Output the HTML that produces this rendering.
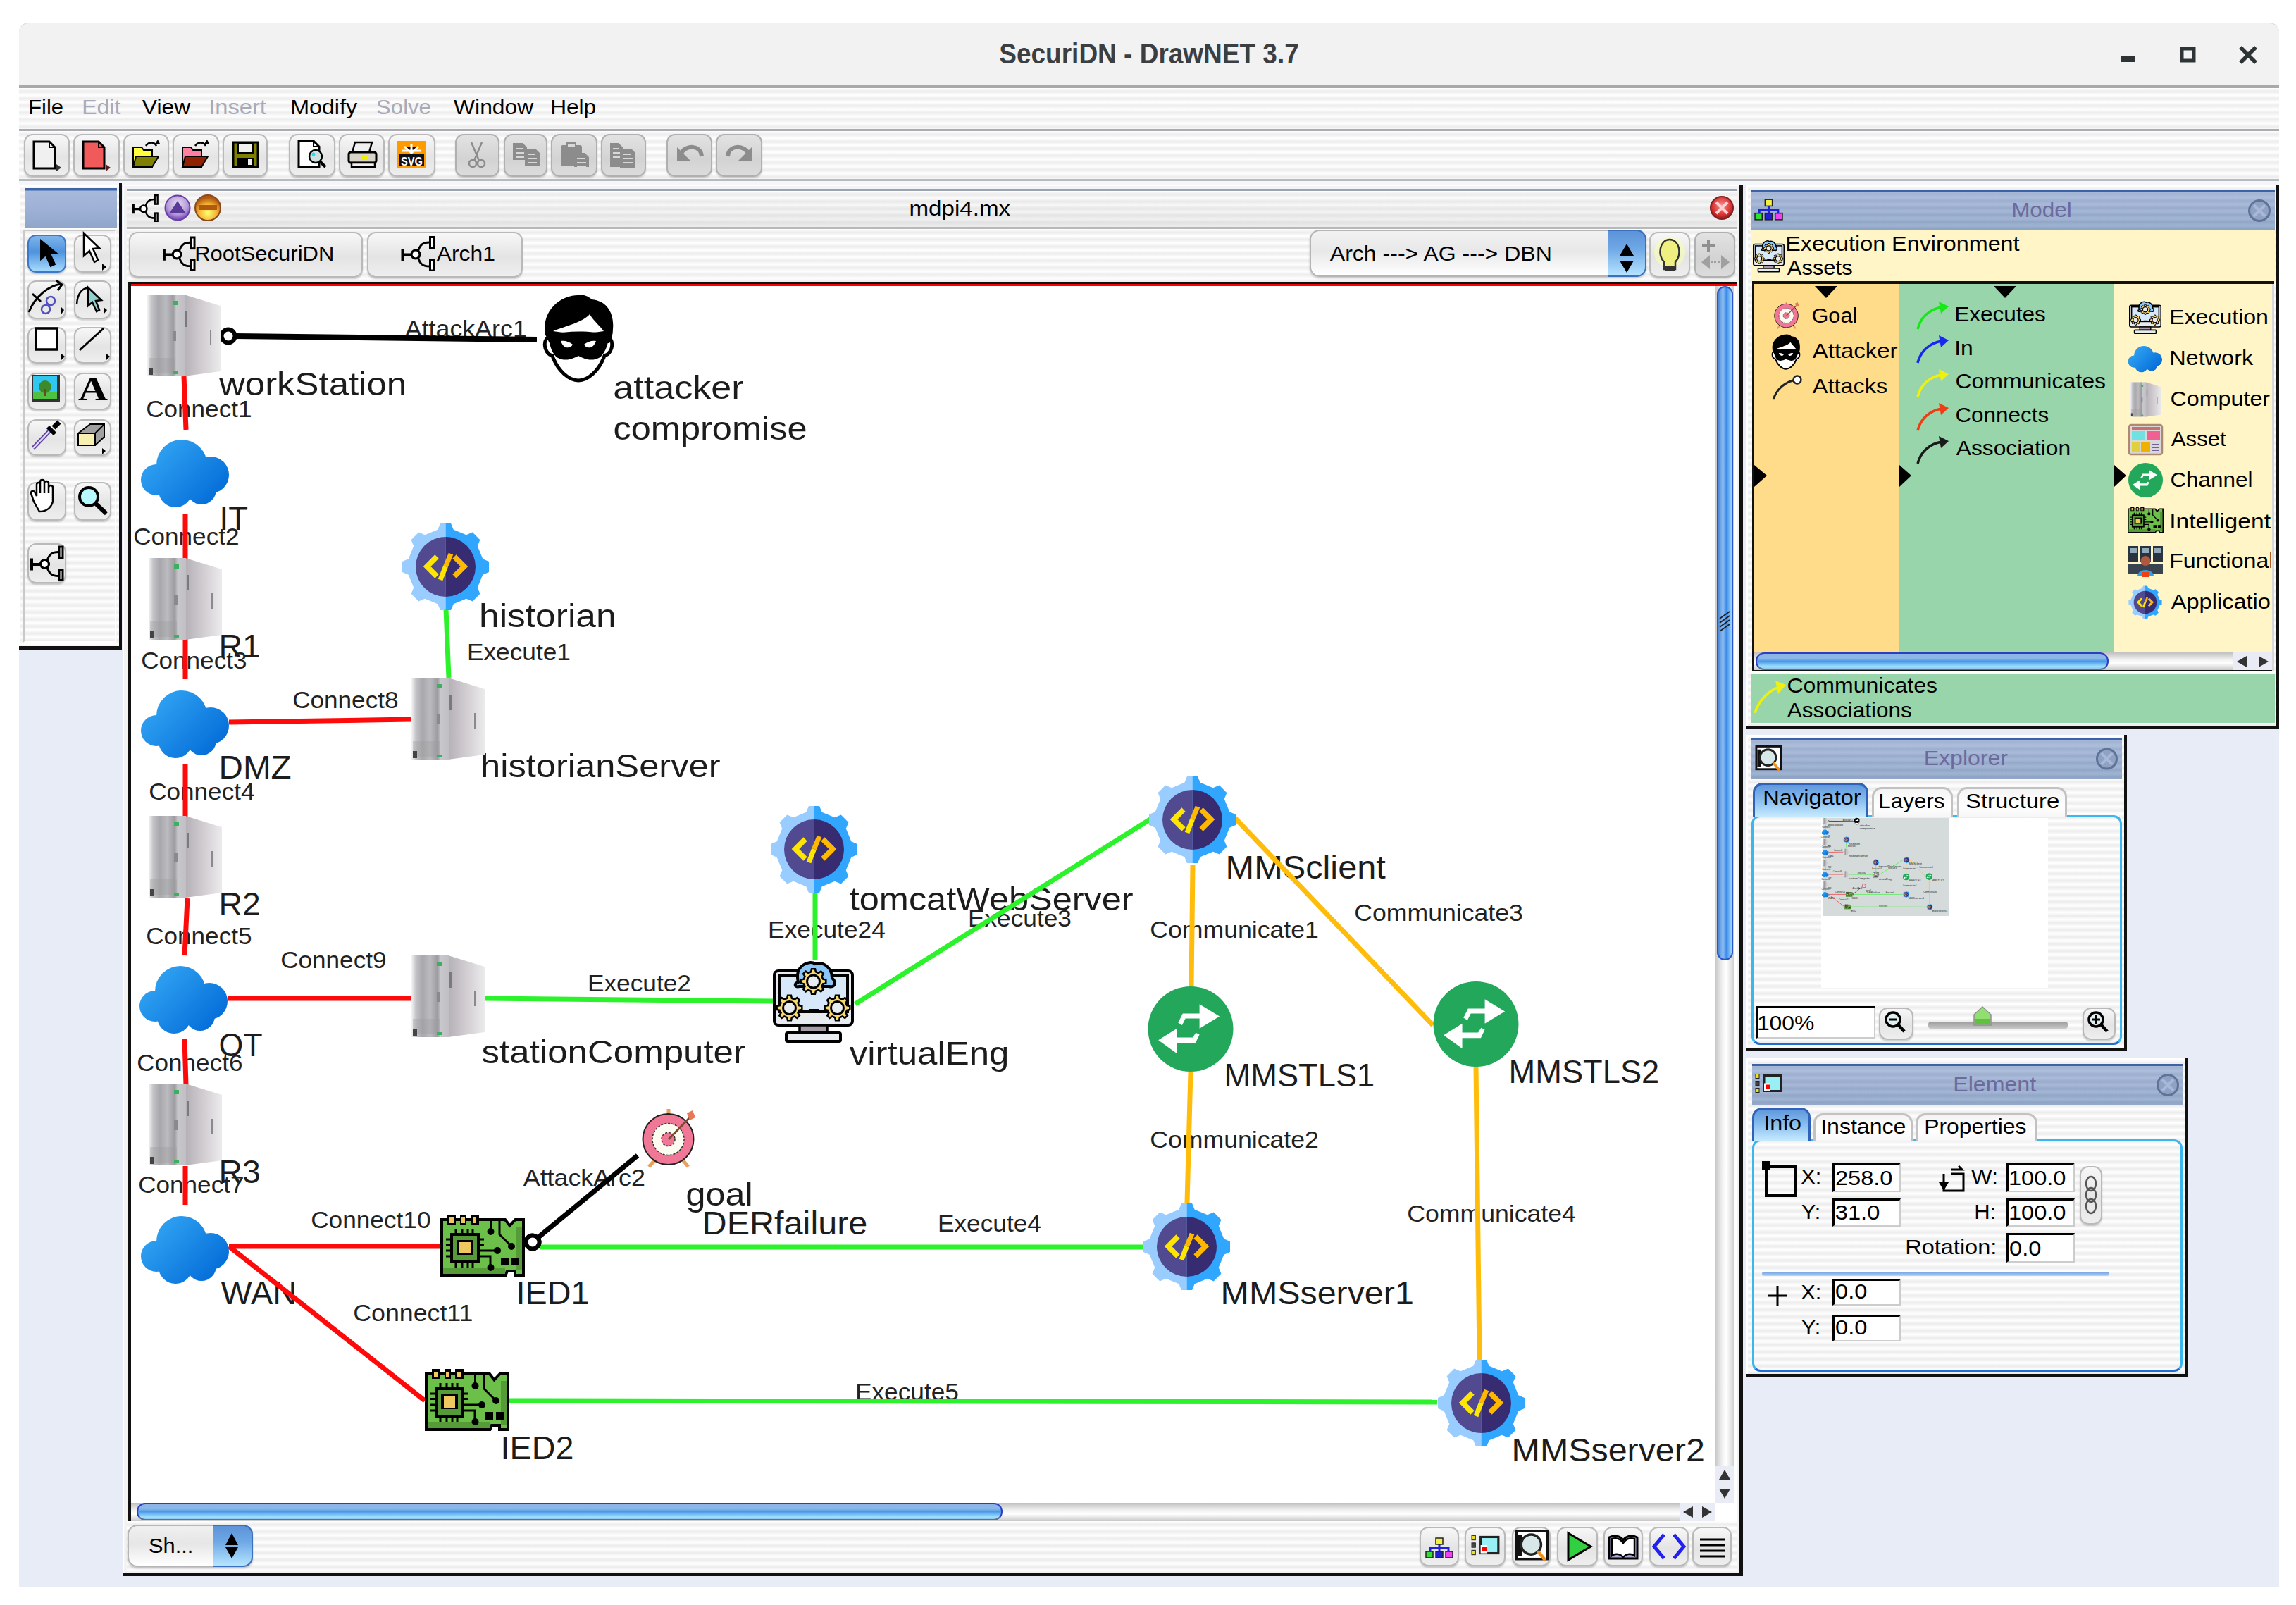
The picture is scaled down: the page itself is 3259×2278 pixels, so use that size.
<!DOCTYPE html>
<html><head><meta charset="utf-8"><title>SecuriDN - DrawNET 3.7</title>
<style>
html,body{margin:0;padding:0;}
body{width:3259px;height:2278px;position:relative;overflow:hidden;background:#fff;font-family:"Liberation Sans", sans-serif;}
body>div{position:absolute;box-sizing:border-box;}
.btn{border-radius:12px;border:2px solid #b9b9b9;background:linear-gradient(180deg,#f7f7f7 0%,#e4e4e4 55%,#eeeeee 100%);box-shadow:0 2px 2px rgba(0,0,0,.18);}
.btnd{border-radius:12px;border:2px solid #b0b0b0;background:linear-gradient(180deg,#e2e2e2 0%,#d3d3d3 60%,#dcdcdc 100%);box-shadow:0 2px 2px rgba(0,0,0,.15);}
.btns{border-radius:12px;border:2px solid #3d78c8;background:linear-gradient(180deg,#7fb4ea 0%,#4d93dd 45%,#a8dcff 100%);box-shadow:0 2px 2px rgba(0,0,0,.2);}
.fld{background:#fff;border-top:3px solid #000;border-left:3px solid #000;border-right:2px solid #ccc;border-bottom:2px solid #ccc;}
svg text{font-family:"Liberation Sans", sans-serif;}
</style></head><body>
<div style="left:27px;top:32px;width:3208px;height:2220px;background:#e8ecf6;border-radius:14px 14px 0 0;"></div>
<div style="left:27px;top:32px;width:3208px;height:91px;background:#f2f2f2;border-radius:14px 14px 0 0;border-top:1px solid #d8d8d8;"></div>
<div style="left:27px;top:121px;width:3208px;height:4px;background:#a9a9a5;"></div>
<div style="left:27px;top:125px;width:3208px;height:58px;background:repeating-linear-gradient(180deg,#ffffff 0px,#ececec 5px,#ffffff 10px);"></div>
<div style="left:27px;top:183px;width:3208px;height:74px;background:repeating-linear-gradient(180deg,#ffffff 0px,#ececec 5px,#ffffff 10px);border-top:3px solid #a9abb1;border-bottom:3px solid #b8bac0;"></div>
<div class="btn" style="left:34px;top:190px;width:65px;height:61px;"></div>
<div class="btn" style="left:104px;top:190px;width:66px;height:61px;"></div>
<div class="btn" style="left:175px;top:190px;width:65px;height:61px;"></div>
<div class="btn" style="left:245px;top:190px;width:66px;height:61px;"></div>
<div class="btn" style="left:316px;top:190px;width:64px;height:61px;"></div>
<div class="btn" style="left:410px;top:190px;width:66px;height:61px;"></div>
<div class="btn" style="left:481px;top:190px;width:65px;height:61px;"></div>
<div class="btn" style="left:551px;top:190px;width:67px;height:61px;"></div>
<div class="btnd" style="left:646px;top:190px;width:63px;height:61px;"></div>
<div class="btnd" style="left:715px;top:190px;width:62px;height:61px;"></div>
<div class="btnd" style="left:782px;top:190px;width:66px;height:61px;"></div>
<div class="btnd" style="left:853px;top:190px;width:64px;height:61px;"></div>
<div class="btnd" style="left:946px;top:190px;width:65px;height:61px;"></div>
<div class="btnd" style="left:1016px;top:190px;width:66px;height:61px;"></div>
<div style="left:27px;top:257px;width:3208px;height:5px;background:#f4f6fa;"></div>
<div style="left:27px;top:262px;width:146px;height:660px;background:repeating-linear-gradient(180deg,#ffffff 0px,#ececec 5px,#ffffff 10px);border-left:2px solid #ffffff;border-top:2px solid #ffffff;"></div>
<div style="left:169px;top:260px;width:4px;height:662px;background:#111;"></div>
<div style="left:27px;top:917px;width:146px;height:5px;background:#111;"></div>
<div style="left:35px;top:267px;width:131px;height:57px;background:linear-gradient(180deg,#3c64a8 0,#3c64a8 3px,#a6b9dc 4px,#9fb1d6 50%,#8ea6c9 100%);"></div>
<div style="left:33px;top:326px;width:132px;height:586px;border:2px solid #c9c9c9;border-right-color:#fff;border-bottom-color:#fff;"></div>
<div class="btns" style="left:39px;top:333px;width:55px;height:54px;"></div>
<div class="btn" style="left:105px;top:333px;width:53px;height:54px;"></div>
<div class="btn" style="left:39px;top:398px;width:55px;height:55px;"></div>
<div class="btn" style="left:105px;top:398px;width:53px;height:55px;"></div>
<div class="btn" style="left:39px;top:464px;width:55px;height:52px;"></div>
<div class="btn" style="left:105px;top:464px;width:53px;height:52px;"></div>
<div class="btn" style="left:39px;top:529px;width:55px;height:53px;"></div>
<div class="btn" style="left:105px;top:529px;width:53px;height:53px;"></div>
<div class="btn" style="left:39px;top:595px;width:55px;height:52px;"></div>
<div class="btn" style="left:105px;top:595px;width:53px;height:52px;"></div>
<div class="btn" style="left:39px;top:684px;width:55px;height:55px;"></div>
<div class="btn" style="left:105px;top:684px;width:53px;height:55px;"></div>
<div class="btn" style="left:39px;top:771px;width:55px;height:57px;"></div>
<div style="left:174px;top:262px;width:2300px;height:1975px;background:#f3f3f3;border-left:2px solid #fff;border-top:2px solid #fff;"></div>
<div style="left:2469px;top:262px;width:5px;height:1975px;background:#111;"></div>
<div style="left:174px;top:2232px;width:2300px;height:5px;background:#111;"></div>
<div style="left:180px;top:268px;width:2286px;height:57px;background:linear-gradient(180deg,rgba(255,255,255,0) 0%,rgba(200,200,200,.35) 100%),repeating-linear-gradient(180deg,#ffffff 0px,#ececec 5px,#ffffff 10px);border-top:3px solid #9aa3b4;border-bottom:3px solid #b8b8b8;"></div>
<div style="left:180px;top:325px;width:2286px;height:76px;background:repeating-linear-gradient(180deg,#ffffff 0px,#ececec 5px,#ffffff 10px);"></div>
<div class="btn" style="left:183px;top:329px;width:332px;height:65px;"></div>
<div class="btn" style="left:521px;top:329px;width:221px;height:65px;"></div>
<div style="left:1859px;top:326px;width:478px;height:67px;border-radius:14px;border:2px solid #b5b5b5;background:linear-gradient(180deg,#f2f2f2,#e8e8e8 45%,#ffffff 100%);box-shadow:0 2px 3px rgba(0,0,0,.2);"></div>
<div style="left:2282px;top:326px;width:55px;height:67px;border-radius:0 14px 14px 0;border:2px solid #3a70c0;border-left:none;background:linear-gradient(180deg,#5d93d8 0%,#6ea8e6 40%,#b6e4ff 100%);"></div>
<div class="btn" style="left:2341px;top:329px;width:58px;height:65px;"></div>
<div class="btnd" style="left:2405px;top:329px;width:58px;height:65px;"></div>
<div style="left:182px;top:401px;width:2284px;height:1759px;background:#fff;"></div>
<div style="left:182px;top:400px;width:2284px;height:3px;background:#111;"></div>
<div style="left:182px;top:403px;width:2284px;height:3px;background:#f00;"></div>
<div style="left:181px;top:400px;width:5px;height:1760px;background:#111;"></div>
<div style="left:2435px;top:406px;width:26px;height:1727px;background:linear-gradient(90deg,#c8c8c8,#f4f4f4 40%,#ffffff 60%,#d0d0d0);"></div>
<div style="left:2437px;top:406px;width:23px;height:957px;border-radius:12px;border:2px solid #2a55c8;background:linear-gradient(90deg,#4a86d8 0%,#8fc0f4 35%,#3d8ae8 60%,#9ed8ff 100%);"></div>
<div style="left:2435px;top:2081px;width:26px;height:52px;background:#e9ecf4;"></div>
<div style="left:186px;top:2133px;width:2249px;height:26px;background:linear-gradient(180deg,#c0c0c0,#f0f0f0 40%,#ffffff 60%,#c8c8c8);"></div>
<div style="left:194px;top:2133px;width:1229px;height:25px;border-radius:12px;border:2px solid #2a40c0;border-bottom-color:#607090;background:linear-gradient(180deg,#8db4e4 0%,#8ab8ea 30%,#4a98e8 50%,#9ee0ff 85%,#90c8f0 100%);"></div>
<div style="left:2384px;top:2133px;width:51px;height:26px;background:#e9ecf4;"></div>
<div style="left:180px;top:2159px;width:2286px;height:71px;background:repeating-linear-gradient(180deg,#ffffff 0px,#ececec 5px,#ffffff 10px);"></div>
<div style="left:181px;top:2164px;width:178px;height:60px;border-radius:14px;border:2px solid #b5b5b5;background:linear-gradient(180deg,#f0f0f0,#e6e6e6 45%,#ffffff 100%);box-shadow:0 2px 3px rgba(0,0,0,.2);"></div>
<div style="left:303px;top:2164px;width:56px;height:60px;border-radius:0 14px 14px 0;border:2px solid #3a70c0;border-left:none;background:linear-gradient(180deg,#5d93d8 0%,#6ea8e6 40%,#b6e4ff 100%);"></div>
<div class="btn" style="left:2015px;top:2167px;width:56px;height:56px;"></div>
<div class="btn" style="left:2079px;top:2167px;width:58px;height:56px;"></div>
<div class="btn" style="left:2146px;top:2167px;width:55px;height:56px;"></div>
<div class="btn" style="left:2210px;top:2167px;width:58px;height:56px;"></div>
<div class="btn" style="left:2276px;top:2167px;width:56px;height:56px;"></div>
<div class="btn" style="left:2341px;top:2167px;width:56px;height:56px;"></div>
<div class="btn" style="left:2402px;top:2167px;width:56px;height:56px;"></div>
<div style="left:2479px;top:262px;width:756px;height:772px;background:repeating-linear-gradient(180deg,#ffffff 0px,#ececec 5px,#ffffff 10px);border-left:2px solid #fff;border-top:2px solid #fff;"></div>
<div style="left:3231px;top:262px;width:4px;height:772px;background:#111;"></div>
<div style="left:2479px;top:1030px;width:756px;height:4px;background:#111;"></div>
<div style="left:2485px;top:270px;width:744px;height:57px;background:linear-gradient(180deg,#3b63a6 0,#3b63a6 3px,rgba(0,0,0,0) 3px),repeating-linear-gradient(180deg,rgba(255,255,255,.10) 0,rgba(0,0,0,.04) 5px,rgba(255,255,255,.10) 10px),linear-gradient(180deg,#a9bcdc 0%,#9fb2d4 45%,#92a9cb 100%);"></div>
<div style="left:2485px;top:327px;width:744px;height:72px;background:#fff5c6;"></div>
<div style="left:2487px;top:399px;width:741px;height:553px;background:#111;"></div>
<div style="left:2490px;top:403px;width:206px;height:523px;background:#ffdc8a;"></div>
<div style="left:2696px;top:403px;width:304px;height:523px;background:#98d5aa;"></div>
<div style="left:3000px;top:403px;width:225px;height:523px;background:#fff5c6;"></div>
<div style="left:3225px;top:403px;width:3px;height:549px;background:#d8d8d8;"></div>
<div style="left:2490px;top:926px;width:735px;height:25px;background:linear-gradient(180deg,#c0c0c0,#f0f0f0 40%,#ffffff 60%,#c8c8c8);"></div>
<div style="left:2492px;top:926px;width:501px;height:25px;border-radius:12px;border:2px solid #2a40c0;border-bottom-color:#607090;background:linear-gradient(180deg,#8db4e4 0%,#8ab8ea 30%,#4a98e8 50%,#9ee0ff 85%,#90c8f0 100%);"></div>
<div style="left:3170px;top:926px;width:55px;height:25px;background:#e9ecf4;"></div>
<div style="left:2485px;top:956px;width:744px;height:70px;background:#98d5aa;"></div>
<div style="left:2479px;top:1043px;width:540px;height:449px;background:repeating-linear-gradient(180deg,#ffffff 0px,#ececec 5px,#ffffff 10px);border-left:2px solid #fff;border-top:2px solid #fff;"></div>
<div style="left:3015px;top:1043px;width:4px;height:449px;background:#111;"></div>
<div style="left:2479px;top:1488px;width:540px;height:4px;background:#111;"></div>
<div style="left:2485px;top:1048px;width:527px;height:58px;background:linear-gradient(180deg,#3b63a6 0,#3b63a6 3px,rgba(0,0,0,0) 3px),repeating-linear-gradient(180deg,rgba(255,255,255,.10) 0,rgba(0,0,0,.04) 5px,rgba(255,255,255,.10) 10px),linear-gradient(180deg,#a9bcdc 0%,#9fb2d4 45%,#92a9cb 100%);"></div>
<div style="left:2486px;top:1157px;width:526px;height:326px;border-radius:12px;border:3px solid #3bb6ee;border-bottom-color:#1e6fd0;"></div>
<div style="left:2488px;top:1111px;width:164px;height:49px;border-radius:14px 14px 0 0;border:3px solid #2f62b8;border-bottom:none;background:linear-gradient(180deg,#5f98dc 0%,#8cc0f0 50%,#c8ecff 100%);"></div>
<div style="left:2657px;top:1117px;width:115px;height:43px;border-radius:14px 14px 0 0;border:3px solid #c2c2c2;border-bottom:none;background:linear-gradient(180deg,#f4f4f4 0%,#ffffff 60%,#f6f6f6 100%);"></div>
<div style="left:2778px;top:1117px;width:156px;height:43px;border-radius:14px 14px 0 0;border:3px solid #c2c2c2;border-bottom:none;background:linear-gradient(180deg,#f4f4f4 0%,#ffffff 60%,#f6f6f6 100%);"></div>
<div style="left:2585px;top:1161px;width:322px;height:241px;background:#fff;"></div>
<div style="left:2587px;top:1161px;width:179px;height:139px;background:#d5dbdb;"></div>
<div class="fld" style="left:2493px;top:1428px;width:169px;height:46px;"></div>
<div class="btn" style="left:2667px;top:1430px;width:49px;height:46px;"></div>
<div class="btn" style="left:2956px;top:1430px;width:47px;height:46px;"></div>
<div style="left:2737px;top:1450px;width:198px;height:10px;background:linear-gradient(180deg,#9c9c9c,#c8c8c8);border-radius:4px;"></div>
<div style="left:2479px;top:1502px;width:627px;height:452px;background:repeating-linear-gradient(180deg,#ffffff 0px,#ececec 5px,#ffffff 10px);border-left:2px solid #fff;border-top:2px solid #fff;"></div>
<div style="left:3102px;top:1502px;width:4px;height:452px;background:#111;"></div>
<div style="left:2479px;top:1950px;width:627px;height:4px;background:#111;"></div>
<div style="left:2487px;top:1510px;width:611px;height:58px;background:linear-gradient(180deg,#3b63a6 0,#3b63a6 3px,rgba(0,0,0,0) 3px),repeating-linear-gradient(180deg,rgba(255,255,255,.10) 0,rgba(0,0,0,.04) 5px,rgba(255,255,255,.10) 10px),linear-gradient(180deg,#a9bcdc 0%,#9fb2d4 45%,#92a9cb 100%);"></div>
<div style="left:2487px;top:1617px;width:611px;height:330px;border-radius:12px;border:3px solid #3bb6ee;border-bottom-color:#1e6fd0;"></div>
<div style="left:2487px;top:1572px;width:83px;height:48px;border-radius:14px 14px 0 0;border:3px solid #2f62b8;border-bottom:none;background:linear-gradient(180deg,#5f98dc 0%,#8cc0f0 50%,#c8ecff 100%);"></div>
<div style="left:2574px;top:1580px;width:141px;height:40px;border-radius:14px 14px 0 0;border:3px solid #c2c2c2;border-bottom:none;background:linear-gradient(180deg,#f4f4f4 0%,#ffffff 60%,#f6f6f6 100%);"></div>
<div style="left:2719px;top:1580px;width:173px;height:40px;border-radius:14px 14px 0 0;border:3px solid #c2c2c2;border-bottom:none;background:linear-gradient(180deg,#f4f4f4 0%,#ffffff 60%,#f6f6f6 100%);"></div>
<div class="fld" style="left:2601px;top:1650px;width:97px;height:42px;"></div>
<div class="fld" style="left:2601px;top:1701px;width:97px;height:40px;"></div>
<div class="fld" style="left:2848px;top:1650px;width:97px;height:42px;"></div>
<div class="fld" style="left:2848px;top:1701px;width:97px;height:40px;"></div>
<div class="fld" style="left:2848px;top:1750px;width:97px;height:42px;"></div>
<div class="fld" style="left:2601px;top:1815px;width:97px;height:38px;"></div>
<div class="fld" style="left:2601px;top:1866px;width:97px;height:38px;"></div>
<div style="left:2501px;top:1805px;width:493px;height:6px;background:linear-gradient(180deg,#6c9ce0,#b8d8f8);border-radius:3px;"></div>
<div class="btn" style="left:2952px;top:1655px;width:32px;height:83px;"></div>
<svg style="position:absolute;left:0;top:0" width="3259" height="2278" viewBox="0 0 3259 2278">
<defs><linearGradient id="gCloud" gradientUnits="userSpaceOnUse" x1="10" y1="0" x2="110" y2="98"><stop offset="0" stop-color="#36aaf6"/><stop offset="1" stop-color="#0068d6"/></linearGradient>
<linearGradient id="gPcSide" x1="0" y1="0" x2="1" y2="0"><stop offset="0" stop-color="#b4b0b6"/><stop offset=".55" stop-color="#d4d0d4"/><stop offset="1" stop-color="#ecebec"/></linearGradient>
<linearGradient id="gPcFront" x1="0" y1="0" x2="1" y2="0"><stop offset="0" stop-color="#f4f4f6"/><stop offset=".12" stop-color="#c4c4c8"/><stop offset=".3" stop-color="#a8a8ac"/><stop offset=".5" stop-color="#bcbcc0"/><stop offset=".7" stop-color="#9c9ca0"/><stop offset=".78" stop-color="#c8c8cc"/><stop offset="1" stop-color="#c0c0c4"/></linearGradient>
<symbol id="pc" viewBox="0 0 104 116">
<polygon points="52,0 104,16 104,109 52,116" fill="url(#gPcSide)"/>
<rect x="0" y="0" width="53" height="116" fill="url(#gPcFront)"/>
<rect x="2" y="90" width="38" height="22" fill="#9a9a9e" opacity=".35"/>
<rect x="36" y="9" width="7" height="6" fill="#3cb060"/>
<rect x="36" y="109" width="7" height="4" fill="#3cb060"/>
<rect x="54" y="24" width="3" height="22" fill="#7a7a7e"/>
<rect x="89" y="50" width="2" height="22" fill="#8a8a8e"/>
<rect x="36" y="52" width="5" height="14" fill="#8a8a8e"/>
<rect x="2" y="104" width="6" height="10" fill="#444"/>
</symbol>
<symbol id="cloud" viewBox="0 0 126 98"><g fill="url(#gCloud)">
<circle cx="58" cy="36" r="36"/><circle cx="99" cy="50" r="26"/><circle cx="22" cy="57" r="22"/>
<circle cx="49" cy="72" r="24"/><circle cx="86" cy="71" r="21"/><ellipse cx="62" cy="60" rx="42" ry="24"/>
</g></symbol>
<symbol id="app" viewBox="0 0 125 125">
<clipPath id="clL"><rect x="0" y="0" width="62.5" height="125"/></clipPath>
<clipPath id="clR"><rect x="62.5" y="0" width="62.5" height="125"/></clipPath>
<path d="M51.3,9.7 L54.9,1.0 L70.1,1.0 L73.7,9.7 L91.9,17.2 L100.7,13.6 L111.4,24.3 L107.8,33.1 L115.3,51.3 L124.0,54.9 L124.0,70.1 L115.3,73.7 L107.8,91.9 L111.4,100.7 L100.7,111.4 L91.9,107.8 L73.7,115.3 L70.1,124.0 L54.9,124.0 L51.3,115.3 L33.1,107.8 L24.3,111.4 L13.6,100.7 L17.2,91.9 L9.7,73.7 L1.0,70.1 L1.0,54.9 L9.7,51.3 L17.2,33.1 L13.6,24.3 L24.3,13.6 L33.1,17.2Z" fill="#9acdff" clip-path="url(#clL)"/>
<path d="M51.3,9.7 L54.9,1.0 L70.1,1.0 L73.7,9.7 L91.9,17.2 L100.7,13.6 L111.4,24.3 L107.8,33.1 L115.3,51.3 L124.0,54.9 L124.0,70.1 L115.3,73.7 L107.8,91.9 L111.4,100.7 L100.7,111.4 L91.9,107.8 L73.7,115.3 L70.1,124.0 L54.9,124.0 L51.3,115.3 L33.1,107.8 L24.3,111.4 L13.6,100.7 L17.2,91.9 L9.7,73.7 L1.0,70.1 L1.0,54.9 L9.7,51.3 L17.2,33.1 L13.6,24.3 L24.3,13.6 L33.1,17.2Z" fill="#31a6ff" clip-path="url(#clR)"/>
<circle cx="62.5" cy="62.5" r="42.5" fill="#524a90" clip-path="url(#clL)"/>
<circle cx="62.5" cy="62.5" r="42.5" fill="#372c72" clip-path="url(#clR)"/>
<path d="M50 48 L36 62 L50 76" fill="none" stroke="#ffe600" stroke-width="7.5"/>
<path d="M75 48 L89 62 L75 76" fill="none" stroke="#ffb800" stroke-width="7.5"/>
<path d="M55 81 L62.5 62" stroke="#ffe600" stroke-width="7"/>
<path d="M62.5 62 L70 44" stroke="#ffb800" stroke-width="7"/>
</symbol>
<symbol id="chan" viewBox="0 0 122 122">
<circle cx="61" cy="61" r="61" fill="#22a75b"/>
<polygon points="43.1,52.0 49.7,38.9 73.7,38.9 73.7,25.4 102.4,42.8 73.7,60.3 73.7,45.9 53.6,45.9 48.8,55.5" fill="#fff"/><polygon points="41.4,73.0 64.1,73.0 68.4,66.4 73.7,69.0 68.0,80.8 41.4,80.8 41.4,96.1 14.8,76.9 41.4,60.3" fill="#fff"/>
</symbol>
<symbol id="ied" viewBox="0 0 120 88">
<path d="M2 7 L92 7 L98.5 15.5 L106.5 7 L118 7 L118 86 L106 86 L106 80 L95 80 L92.5 86 L2 86 Z" fill="#6cc04a" stroke="#000" stroke-width="4"/>
<rect x="4" y="75" width="88" height="9" fill="#559c38"/><rect x="108" y="17" width="8" height="62" fill="#559c38"/>
<rect x="10" y="0" width="12" height="14" fill="#000"/><rect x="13" y="4" width="6" height="8" fill="#f0c860"/>
<rect x="28" y="0" width="9" height="14" fill="#000"/><rect x="30" y="4" width="5" height="8" fill="#f0c860"/>
<rect x="43" y="0" width="12" height="14" fill="#000"/><rect x="46" y="4" width="5" height="8" fill="#f0c860"/>
<g stroke="#000" stroke-width="3" fill="none">
<path d="M22 20 V28 M31 20 V28 M39 20 V28 M46 20 V28 M22 67 V75 M31 67 V75 M39 67 V75 M46 67 V75"/>
<path d="M8 35 H16 M8 42.5 H16 M8 51 H16 M8 59 H16 M54 35 H62 M54 42.5 H62"/>
<path d="M54 51 H79 M54 59 H71 V73 M71.5 7 V22 M84 7 V28 L101 45"/>
</g>
<rect x="16" y="28" width="38" height="39" fill="#559c38" stroke="#000" stroke-width="4"/>
<rect x="23" y="36" width="24" height="21" fill="#000"/><rect x="27" y="39" width="16" height="16" fill="#f0c860"/>
<circle cx="81" cy="51" r="5" fill="#000"/><circle cx="71.5" cy="24" r="5" fill="#000"/><circle cx="101" cy="45" r="5" fill="#000"/><circle cx="71.5" cy="75" r="5" fill="#000"/>
<rect x="86" y="61" width="11" height="11" fill="#000"/><rect x="101" y="61" width="11" height="11" fill="#000"/>
</symbol>
<symbol id="attacker" viewBox="0 0 102 126">
<path d="M12 62 C0 60 0 84 14 88 C22 110 38 123 51 123 C64 123 80 110 88 88 C102 84 102 60 90 62" fill="#fff" stroke="#000" stroke-width="5"/>
<path d="M4 58 C-2 22 28 2 50 2 C58 0 66 4 70 8 C92 10 102 28 100 50 C100 58 98 64 95 70 L10 70 Z" fill="#000"/>
<path d="M15 53 C35 45 58 40 67 29 C74 40 82 46 87 53 C64 57 38 57 15 53 Z" fill="#fff"/>
<path d="M9 58 C35 52 70 52 94 58 C94 70 90 82 82 90 C72 96 62 94 51 88 C40 94 30 96 20 90 C12 82 9 70 9 58 Z" fill="#000"/>
<path d="M26 67 C32 66 38 68 43 72 C40 78 30 79 26 67 Z M76 67 C70 66 64 68 59 72 C62 78 72 79 76 67 Z" fill="#fff"/>
</symbol>
<symbol id="goal" viewBox="0 0 77 90">
<path d="M20 71 L10 82 M57 71 L66 82" stroke="#e8a060" stroke-width="5"/>
<rect x="35.5" y="0" width="5" height="7" fill="#e8a060"/>
<circle cx="37.5" cy="43" r="36" fill="#f07896" stroke="#222" stroke-width="2"/>
<circle cx="37.5" cy="43" r="22.5" fill="#fcfcf0" stroke="#333" stroke-width="1.5" stroke-dasharray="3 2"/>
<circle cx="37.5" cy="43" r="9.5" fill="#f07896" stroke="#333" stroke-width="1.5" stroke-dasharray="3 2"/>
<path d="M38 43 L70 10" stroke="#7a4a30" stroke-width="3"/>
<path d="M64 6 L72 2 L76 12 L68 16 Z" fill="#e87858"/>
</symbol>
<symbol id="veng" viewBox="0 0 115 120">
<rect x="2" y="18" width="111" height="77" rx="6" fill="#e8ecf0" stroke="#000" stroke-width="4"/>
<rect x="9" y="24" width="97" height="52" fill="#d6e8fa" stroke="#000" stroke-width="4"/>
<rect x="38" y="95" width="39" height="11" fill="#a89ca8" stroke="#000" stroke-width="3.5"/>
<rect x="19" y="106" width="77" height="12" rx="2" fill="#e8ecf0" stroke="#000" stroke-width="4"/>
<path d="M36 34 C30 10 52 2 60 8 C72 4 84 14 84 28 C92 36 86 42 80 40 L38 40 C30 42 30 36 36 34 Z" fill="#8ac6fa" stroke="#000" stroke-width="4"/>
<path d="M54.1,19.4 L55.0,15.2 L60.0,15.2 L60.9,19.4 L64.7,21.0 L68.3,18.6 L71.9,22.2 L69.5,25.8 L71.1,29.6 L75.3,30.5 L75.3,35.5 L71.1,36.4 L69.5,40.2 L71.9,43.8 L68.3,47.4 L64.7,45.0 L60.9,46.6 L60.0,50.8 L55.0,50.8 L54.1,46.6 L50.3,45.0 L46.7,47.4 L43.1,43.8 L45.5,40.2 L43.9,36.4 L39.7,35.5 L39.7,30.5 L43.9,29.6 L45.5,25.8 L43.1,22.2 L46.7,18.6 L50.3,21.0Z" fill="#f8d870" stroke="#000" stroke-width="2.5"/><circle cx="57.5" cy="33.0" r="9.0" fill="#e8ecf0" stroke="#000" stroke-width="3"/><path d="M20.1,56.9 L21.0,52.7 L26.0,52.7 L26.9,56.9 L30.7,58.5 L34.3,56.1 L37.9,59.7 L35.5,63.3 L37.1,67.1 L41.3,68.0 L41.3,73.0 L37.1,73.9 L35.5,77.7 L37.9,81.3 L34.3,84.9 L30.7,82.5 L26.9,84.1 L26.0,88.3 L21.0,88.3 L20.1,84.1 L16.3,82.5 L12.7,84.9 L9.1,81.3 L11.5,77.7 L9.9,73.9 L5.7,73.0 L5.7,68.0 L9.9,67.1 L11.5,63.3 L9.1,59.7 L12.7,56.1 L16.3,58.5Z" fill="#f8d870" stroke="#000" stroke-width="2.5"/><circle cx="23.5" cy="70.5" r="9.0" fill="#e8ecf0" stroke="#000" stroke-width="3"/><path d="M88.1,56.9 L89.0,52.7 L94.0,52.7 L94.9,56.9 L98.7,58.5 L102.3,56.1 L105.9,59.7 L103.5,63.3 L105.1,67.1 L109.3,68.0 L109.3,73.0 L105.1,73.9 L103.5,77.7 L105.9,81.3 L102.3,84.9 L98.7,82.5 L94.9,84.1 L94.0,88.3 L89.0,88.3 L88.1,84.1 L84.3,82.5 L80.7,84.9 L77.1,81.3 L79.5,77.7 L77.9,73.9 L73.7,73.0 L73.7,68.0 L77.9,67.1 L79.5,63.3 L77.1,59.7 L80.7,56.1 L84.3,58.5Z" fill="#f8d870" stroke="#000" stroke-width="2.5"/><circle cx="91.5" cy="70.5" r="9.0" fill="#e8ecf0" stroke="#000" stroke-width="3"/>
<path d="M52 74 L66 74" stroke="#000" stroke-width="4"/>
</symbol></defs>
<g id="diag">
<text x="311.1" y="561.0" font-size="47.15" textLength="265.9" lengthAdjust="spacingAndGlyphs" fill="#1c1c1c">workStation</text>
<text x="870.3" y="565.5" font-size="47.15" textLength="185.3" lengthAdjust="spacingAndGlyphs" fill="#1c1c1c">attacker</text>
<text x="870.5" y="624.3" font-size="47.15" textLength="275.1" lengthAdjust="spacingAndGlyphs" fill="#1c1c1c">compromise</text>
<text x="311.6" y="752.0" font-size="47.15" textLength="40.3" lengthAdjust="spacingAndGlyphs" fill="#1c1c1c">IT</text>
<text x="680.0" y="890.0" font-size="47.15" textLength="194.6" lengthAdjust="spacingAndGlyphs" fill="#1c1c1c">historian</text>
<text x="310.6" y="933.0" font-size="47.15" textLength="59.2" lengthAdjust="spacingAndGlyphs" fill="#1c1c1c">R1</text>
<text x="682.0" y="1103.0" font-size="47.15" textLength="340.5" lengthAdjust="spacingAndGlyphs" fill="#1c1c1c">historianServer</text>
<text x="310.6" y="1105.0" font-size="47.15" textLength="103.1" lengthAdjust="spacingAndGlyphs" fill="#1c1c1c">DMZ</text>
<text x="310.6" y="1299.0" font-size="47.15" textLength="59.2" lengthAdjust="spacingAndGlyphs" fill="#1c1c1c">R2</text>
<text x="1205.8" y="1292.0" font-size="47.15" textLength="402.8" lengthAdjust="spacingAndGlyphs" fill="#1c1c1c">tomcatWebServer</text>
<text x="1739.6" y="1247.0" font-size="47.15" textLength="227.3" lengthAdjust="spacingAndGlyphs" fill="#1c1c1c">MMSclient</text>
<text x="310.5" y="1499.0" font-size="47.15" textLength="62.2" lengthAdjust="spacingAndGlyphs" fill="#1c1c1c">OT</text>
<text x="683.6" y="1509.0" font-size="47.15" textLength="374.4" lengthAdjust="spacingAndGlyphs" fill="#1c1c1c">stationComputer</text>
<text x="1205.7" y="1511.0" font-size="47.15" textLength="226.8" lengthAdjust="spacingAndGlyphs" fill="#1c1c1c">virtualEng</text>
<text x="1737.6" y="1542.0" font-size="47.15" textLength="213.6" lengthAdjust="spacingAndGlyphs" fill="#1c1c1c">MMSTLS1</text>
<text x="2141.6" y="1537.0" font-size="47.15" textLength="213.6" lengthAdjust="spacingAndGlyphs" fill="#1c1c1c">MMSTLS2</text>
<text x="310.6" y="1679.0" font-size="47.15" textLength="59.2" lengthAdjust="spacingAndGlyphs" fill="#1c1c1c">R3</text>
<text x="973.5" y="1711.0" font-size="47.15" textLength="95.1" lengthAdjust="spacingAndGlyphs" fill="#1c1c1c">goal</text>
<text x="996.6" y="1752.0" font-size="47.15" textLength="234.8" lengthAdjust="spacingAndGlyphs" fill="#1c1c1c">DERfailure</text>
<text x="313.5" y="1851.0" font-size="47.15" textLength="107.7" lengthAdjust="spacingAndGlyphs" fill="#1c1c1c">WAN</text>
<text x="732.6" y="1851.0" font-size="47.15" textLength="103.8" lengthAdjust="spacingAndGlyphs" fill="#1c1c1c">IED1</text>
<text x="1732.6" y="1851.0" font-size="47.15" textLength="274.2" lengthAdjust="spacingAndGlyphs" fill="#1c1c1c">MMSserver1</text>
<text x="710.6" y="2071.0" font-size="47.15" textLength="103.8" lengthAdjust="spacingAndGlyphs" fill="#1c1c1c">IED2</text>
<text x="2145.6" y="2074.0" font-size="47.15" textLength="274.2" lengthAdjust="spacingAndGlyphs" fill="#1c1c1c">MMSserver2</text>
<text x="574.8" y="478.0" font-size="33.38" textLength="173.0" lengthAdjust="spacingAndGlyphs" fill="#222">AttackArc1</text>
<text x="207.2" y="592.0" font-size="33.38" textLength="150.3" lengthAdjust="spacingAndGlyphs" fill="#222">Connect1</text>
<text x="189.2" y="773.0" font-size="33.38" textLength="150.3" lengthAdjust="spacingAndGlyphs" fill="#222">Connect2</text>
<text x="200.2" y="949.0" font-size="33.38" textLength="150.3" lengthAdjust="spacingAndGlyphs" fill="#222">Connect3</text>
<text x="415.2" y="1005.0" font-size="33.38" textLength="150.3" lengthAdjust="spacingAndGlyphs" fill="#222">Connect8</text>
<text x="662.9" y="937.0" font-size="33.38" textLength="147.0" lengthAdjust="spacingAndGlyphs" fill="#222">Execute1</text>
<text x="211.2" y="1135.0" font-size="33.38" textLength="150.3" lengthAdjust="spacingAndGlyphs" fill="#222">Connect4</text>
<text x="207.2" y="1340.0" font-size="33.38" textLength="150.3" lengthAdjust="spacingAndGlyphs" fill="#222">Connect5</text>
<text x="398.2" y="1374.0" font-size="33.38" textLength="150.3" lengthAdjust="spacingAndGlyphs" fill="#222">Connect9</text>
<text x="833.9" y="1407.0" font-size="33.38" textLength="147.0" lengthAdjust="spacingAndGlyphs" fill="#222">Execute2</text>
<text x="1089.9" y="1331.0" font-size="33.38" textLength="167.0" lengthAdjust="spacingAndGlyphs" fill="#222">Execute24</text>
<text x="1373.9" y="1315.0" font-size="33.38" textLength="147.0" lengthAdjust="spacingAndGlyphs" fill="#222">Execute3</text>
<text x="1632.2" y="1331.0" font-size="33.38" textLength="239.7" lengthAdjust="spacingAndGlyphs" fill="#222">Communicate1</text>
<text x="1922.2" y="1307.0" font-size="33.38" textLength="239.7" lengthAdjust="spacingAndGlyphs" fill="#222">Communicate3</text>
<text x="194.2" y="1520.0" font-size="33.38" textLength="150.3" lengthAdjust="spacingAndGlyphs" fill="#222">Connect6</text>
<text x="196.2" y="1693.0" font-size="33.38" textLength="150.3" lengthAdjust="spacingAndGlyphs" fill="#222">Connect7</text>
<text x="441.2" y="1743.0" font-size="33.38" textLength="170.3" lengthAdjust="spacingAndGlyphs" fill="#222">Connect10</text>
<text x="742.8" y="1683.0" font-size="33.38" textLength="173.0" lengthAdjust="spacingAndGlyphs" fill="#222">AttackArc2</text>
<text x="501.2" y="1875.0" font-size="33.38" textLength="170.3" lengthAdjust="spacingAndGlyphs" fill="#222">Connect11</text>
<text x="1330.9" y="1748.0" font-size="33.38" textLength="147.0" lengthAdjust="spacingAndGlyphs" fill="#222">Execute4</text>
<text x="1632.2" y="1629.0" font-size="33.38" textLength="239.7" lengthAdjust="spacingAndGlyphs" fill="#222">Communicate2</text>
<text x="1997.2" y="1734.0" font-size="33.38" textLength="239.7" lengthAdjust="spacingAndGlyphs" fill="#222">Communicate4</text>
<text x="1213.9" y="1987.0" font-size="33.38" textLength="147.0" lengthAdjust="spacingAndGlyphs" fill="#222">Execute5</text>
<path d="M261 534 L264 610" stroke="#ff0a0a" stroke-width="7"/>
<path d="M263 729 L263 794" stroke="#ff0a0a" stroke-width="7"/>
<path d="M263 907 L263 964" stroke="#ff0a0a" stroke-width="7"/>
<path d="M263 1084 L263 1160" stroke="#ff0a0a" stroke-width="7"/>
<path d="M266 1275 L262 1356" stroke="#ff0a0a" stroke-width="7"/>
<path d="M262 1475 L264 1540" stroke="#ff0a0a" stroke-width="7"/>
<path d="M263 1655 L263 1710" stroke="#ff0a0a" stroke-width="7"/>
<path d="M325 1025 L584 1021" stroke="#ff0a0a" stroke-width="7"/>
<path d="M323 1417 L584 1417" stroke="#ff0a0a" stroke-width="7"/>
<path d="M325 1769 L627 1769" stroke="#ff0a0a" stroke-width="7"/>
<path d="M325 1769 L603 1988" stroke="#ff0a0a" stroke-width="7"/>
<path d="M633 864 L637 962" stroke="#2cf22c" stroke-width="7"/>
<path d="M687 1417 L1097 1421" stroke="#2cf22c" stroke-width="7"/>
<path d="M1157 1268 L1157 1362" stroke="#2cf22c" stroke-width="7"/>
<path d="M1214 1425 L1634 1162" stroke="#2cf22c" stroke-width="7"/>
<path d="M767 1770 L1624 1770" stroke="#2cf22c" stroke-width="7"/>
<path d="M723 1988 L2040 1990" stroke="#2cf22c" stroke-width="7"/>
<path d="M1693 1227 L1691 1401" stroke="#ffbc0a" stroke-width="7"/>
<path d="M1753 1161 L2034 1455" stroke="#ffbc0a" stroke-width="7"/>
<path d="M1690 1521 L1685 1707" stroke="#ffbc0a" stroke-width="7"/>
<path d="M2095 1512 L2100 1930" stroke="#ffbc0a" stroke-width="7"/>
<path d="M333 477 L762 482" stroke="#000" stroke-width="8"/>
<circle cx="324" cy="477" r="9.5" fill="#fff" stroke="#000" stroke-width="6"/>
<path d="M763 1757 L905 1640" stroke="#000" stroke-width="7"/>
<circle cx="756" cy="1763" r="9.5" fill="#fff" stroke="#000" stroke-width="6"/>
<use href="#pc" x="209.0" y="418.0" width="104.0" height="116.0"/>
<use href="#pc" x="211.0" y="792.0" width="104.0" height="116.0"/>
<use href="#pc" x="584.0" y="962.0" width="104.0" height="116.0"/>
<use href="#pc" x="211.0" y="1158.0" width="104.0" height="116.0"/>
<use href="#pc" x="584.0" y="1356.0" width="104.0" height="116.0"/>
<use href="#pc" x="211.0" y="1538.0" width="104.0" height="116.0"/>
<use href="#cloud" x="200.0" y="624.0" width="126.0" height="98.0"/>
<use href="#cloud" x="200.0" y="980.0" width="126.0" height="98.0"/>
<use href="#cloud" x="198.0" y="1371.0" width="126.0" height="98.0"/>
<use href="#cloud" x="200.0" y="1726.0" width="126.0" height="98.0"/>
<use href="#app" x="570.0" y="742.0" width="125.0" height="125.0"/>
<use href="#app" x="1093.0" y="1143.0" width="125.0" height="125.0"/>
<use href="#app" x="1630.0" y="1101.0" width="125.0" height="125.0"/>
<use href="#app" x="1622.0" y="1707.0" width="125.0" height="125.0"/>
<use href="#app" x="2040.0" y="1929.0" width="125.0" height="125.0"/>
<use href="#chan" x="1629.0" y="1400.0" width="122.0" height="121.0"/>
<use href="#chan" x="2034.0" y="1393.0" width="122.0" height="121.0"/>
<use href="#ied" x="625.0" y="1724.0" width="120.0" height="88.0"/>
<use href="#ied" x="603.0" y="1943.0" width="120.0" height="88.0"/>
<use href="#attacker" x="770.0" y="417.0" width="102.0" height="126.0"/>
<use href="#goal" x="911.0" y="1574.0" width="77.0" height="90.0"/>
<use href="#veng" x="1097.0" y="1360.0" width="115.0" height="120.0"/>
<circle cx="756" cy="1763" r="9.5" fill="#fff" stroke="#000" stroke-width="6"/>
</g>
<text x="1418.3" y="90.0" font-size="40.26" textLength="425.5" lengthAdjust="spacingAndGlyphs" fill="#3b3f42" font-weight="bold">SecuriDN - DrawNET 3.7</text>
<rect x="3010" y="80" width="21" height="8" fill="#2e3436"/>
<rect x="3097" y="69" width="17" height="17" fill="none" stroke="#2e3436" stroke-width="5"/>
<path d="M3182 69 L3200 87 M3200 69 L3182 87" stroke="#2e3436" stroke-width="5.5" stroke-linecap="square"/>
<text x="40.2" y="162.0" font-size="30.20" textLength="49.8" lengthAdjust="spacingAndGlyphs" fill="#000">File</text>
<text x="116.2" y="162.0" font-size="30.20" textLength="55.2" lengthAdjust="spacingAndGlyphs" fill="#a8aab8">Edit</text>
<text x="201.8" y="162.0" font-size="30.20" textLength="68.3" lengthAdjust="spacingAndGlyphs" fill="#000">View</text>
<text x="296.2" y="162.0" font-size="30.20" textLength="81.7" lengthAdjust="spacingAndGlyphs" fill="#a8aab8">Insert</text>
<text x="412.2" y="162.0" font-size="30.20" textLength="94.9" lengthAdjust="spacingAndGlyphs" fill="#000">Modify</text>
<text x="534.1" y="162.0" font-size="30.20" textLength="77.8" lengthAdjust="spacingAndGlyphs" fill="#a8aab8">Solve</text>
<text x="644.1" y="162.0" font-size="30.20" textLength="113.0" lengthAdjust="spacingAndGlyphs" fill="#000">Window</text>
<text x="781.2" y="162.0" font-size="30.20" textLength="65.0" lengthAdjust="spacingAndGlyphs" fill="#000">Help</text>
<text x="1290.4" y="306.0" font-size="30.20" textLength="143.7" lengthAdjust="spacingAndGlyphs" fill="#000">mdpi4.mx</text>
<text x="276.2" y="370.0" font-size="30.20" textLength="198.1" lengthAdjust="spacingAndGlyphs" fill="#000">RootSecuriDN</text>
<text x="619.8" y="370.0" font-size="30.20" textLength="83.1" lengthAdjust="spacingAndGlyphs" fill="#000">Arch1</text>
<text x="1887.8" y="370.0" font-size="30.20" textLength="315.0" lengthAdjust="spacingAndGlyphs" fill="#000">Arch ---&gt; AG ---&gt; DBN</text>
<path d="M2309 346 L2299 363 L2319 363 Z M2309 387 L2299 370 L2319 370 Z" fill="#000"/>
<path d="M2441 878 L2455 868 M2441 884 L2455 874 M2441 890 L2455 880 M2441 896 L2455 886" stroke="#222" stroke-width="1.8"/>
<path d="M2448 2086 L2440 2100 L2456 2100 Z M2448 2127 L2440 2113 L2456 2113 Z" fill="#333"/>
<path d="M2389 2146 L2403 2138 L2403 2154 Z M2430 2146 L2416 2138 L2416 2154 Z" fill="#333"/>
<text x="211.1" y="2204.0" font-size="30.20" textLength="63.3" lengthAdjust="spacingAndGlyphs" fill="#000">Sh...</text>
<path d="M329 2176 L320 2193 L338 2193 Z M329 2212 L320 2196 L338 2196 Z" fill="#000"/>
<text x="2855.2" y="307.5" font-size="30.20" textLength="85.6" lengthAdjust="spacingAndGlyphs" fill="#6d6a9e">Model</text>
<circle cx="3207.0" cy="299.0" r="14.5" fill="#8fa2c4" stroke="#5f7398" stroke-width="3"/>
<path d="M3199.0 291.0 L3215.0 307.0 M3215.0 291.0 L3199.0 307.0" stroke="#a8b8d8" stroke-width="4"/>
<text x="2534.2" y="355.5" font-size="30.20" textLength="332.4" lengthAdjust="spacingAndGlyphs" fill="#000">Execution Environment</text>
<text x="2536.8" y="390.0" font-size="30.20" textLength="92.8" lengthAdjust="spacingAndGlyphs" fill="#000">Assets</text>
<path d="M3175 939 L3189 931 L3189 947 Z M3220 939 L3206 931 L3206 947 Z" fill="#333"/>
<path d="M2576 406 L2608 406 L2592 423 Z M2830 406 L2862 406 L2846 423 Z" fill="#000"/>
<path d="M2490 660 L2508 675 L2490 691 Z M2696 660 L2713 675 L2696 691 Z M3001 660 L3018 675 L3001 691 Z" fill="#000"/>
<text x="2571.4" y="458.0" font-size="30.20" textLength="64.9" lengthAdjust="spacingAndGlyphs" fill="#000">Goal</text>
<text x="2572.8" y="508.0" font-size="30.20" textLength="120.7" lengthAdjust="spacingAndGlyphs" fill="#000">Attacker</text>
<text x="2572.8" y="558.0" font-size="30.20" textLength="106.3" lengthAdjust="spacingAndGlyphs" fill="#000">Attacks</text>
<text x="2774.2" y="456.0" font-size="30.20" textLength="129.7" lengthAdjust="spacingAndGlyphs" fill="#000">Executes</text>
<text x="2774.2" y="504.0" font-size="30.20" textLength="26.5" lengthAdjust="spacingAndGlyphs" fill="#000">In</text>
<text x="2775.4" y="551.0" font-size="30.20" textLength="213.6" lengthAdjust="spacingAndGlyphs" fill="#000">Communicates</text>
<text x="2775.4" y="599.0" font-size="30.20" textLength="132.7" lengthAdjust="spacingAndGlyphs" fill="#000">Connects</text>
<text x="2776.8" y="646.0" font-size="30.20" textLength="162.3" lengthAdjust="spacingAndGlyphs" fill="#000">Association</text>
<clipPath id="clipPal"><rect x="3000" y="403" width="224" height="523"/></clipPath><g clip-path="url(#clipPal)">
<text x="3079.2" y="460.0" font-size="30.20" textLength="140.7" lengthAdjust="spacingAndGlyphs" fill="#000">Execution</text>
<text x="3079.2" y="518.0" font-size="30.20" textLength="119.0" lengthAdjust="spacingAndGlyphs" fill="#000">Network</text>
<text x="3080.4" y="576.0" font-size="30.20" textLength="141.7" lengthAdjust="spacingAndGlyphs" fill="#000">Computer</text>
<text x="3081.8" y="633.0" font-size="30.20" textLength="77.9" lengthAdjust="spacingAndGlyphs" fill="#000">Asset</text>
<text x="3080.4" y="691.0" font-size="30.20" textLength="117.0" lengthAdjust="spacingAndGlyphs" fill="#000">Channel</text>
<text x="3079.2" y="749.5" font-size="30.20" textLength="143.8" lengthAdjust="spacingAndGlyphs" fill="#000">Intelligent</text>
<text x="3079.2" y="806.0" font-size="30.20" textLength="148.2" lengthAdjust="spacingAndGlyphs" fill="#000">Functional</text>
<text x="3081.8" y="864.0" font-size="30.20" textLength="159.2" lengthAdjust="spacingAndGlyphs" fill="#000">Application</text>
</g>
<text x="2536.4" y="983.0" font-size="30.20" textLength="213.6" lengthAdjust="spacingAndGlyphs" fill="#000">Communicates</text>
<text x="2536.8" y="1018.0" font-size="30.20" textLength="177.1" lengthAdjust="spacingAndGlyphs" fill="#000">Associations</text>
<text x="2730.7" y="1086.0" font-size="30.20" textLength="119.3" lengthAdjust="spacingAndGlyphs" fill="#6d6a9e">Explorer</text>
<circle cx="2990.5" cy="1077.0" r="14.0" fill="#8fa2c4" stroke="#5f7398" stroke-width="3"/>
<path d="M2982.8 1069.2 L2998.2 1084.8 M2998.2 1069.2 L2982.8 1084.8" stroke="#a8b8d8" stroke-width="4"/>
<text x="2502.2" y="1141.5" font-size="30.20" textLength="139.5" lengthAdjust="spacingAndGlyphs" fill="#000">Navigator</text>
<text x="2666.2" y="1146.5" font-size="30.20" textLength="94.3" lengthAdjust="spacingAndGlyphs" fill="#000">Layers</text>
<text x="2790.1" y="1146.5" font-size="30.20" textLength="133.2" lengthAdjust="spacingAndGlyphs" fill="#000">Structure</text>
<text x="2493.9" y="1462.0" font-size="30.20" textLength="81.5" lengthAdjust="spacingAndGlyphs" fill="#000">100%</text>
<text x="2772.2" y="1548.5" font-size="30.20" textLength="118.0" lengthAdjust="spacingAndGlyphs" fill="#6d6a9e">Element</text>
<circle cx="3077.0" cy="1540.0" r="14.5" fill="#8fa2c4" stroke="#5f7398" stroke-width="3"/>
<path d="M3069.0 1532.0 L3085.0 1548.0 M3085.0 1532.0 L3069.0 1548.0" stroke="#a8b8d8" stroke-width="4"/>
<text x="2503.2" y="1604.0" font-size="30.20" textLength="53.9" lengthAdjust="spacingAndGlyphs" fill="#000">Info</text>
<text x="2584.2" y="1609.0" font-size="30.20" textLength="121.2" lengthAdjust="spacingAndGlyphs" fill="#000">Instance</text>
<text x="2731.2" y="1609.0" font-size="30.20" textLength="145.2" lengthAdjust="spacingAndGlyphs" fill="#000">Properties</text>
<text x="2604.9" y="1682.0" font-size="30.20" textLength="81.6" lengthAdjust="spacingAndGlyphs" fill="#000">258.0</text>
<text x="2604.8" y="1731.0" font-size="30.20" textLength="63.5" lengthAdjust="spacingAndGlyphs" fill="#000">31.0</text>
<text x="2850.9" y="1682.0" font-size="30.20" textLength="81.6" lengthAdjust="spacingAndGlyphs" fill="#000">100.0</text>
<text x="2850.9" y="1731.0" font-size="30.20" textLength="81.6" lengthAdjust="spacingAndGlyphs" fill="#000">100.0</text>
<text x="2852.1" y="1782.0" font-size="30.20" textLength="45.3" lengthAdjust="spacingAndGlyphs" fill="#000">0.0</text>
<text x="2605.1" y="1843.0" font-size="30.20" textLength="45.3" lengthAdjust="spacingAndGlyphs" fill="#000">0.0</text>
<text x="2605.1" y="1894.0" font-size="30.20" textLength="45.3" lengthAdjust="spacingAndGlyphs" fill="#000">0.0</text>
<text x="2556.2" y="1680.0" font-size="30.20" textLength="29.1" lengthAdjust="spacingAndGlyphs" fill="#000">X:</text>
<text x="2557.1" y="1730.0" font-size="30.20" textLength="27.0" lengthAdjust="spacingAndGlyphs" fill="#000">Y:</text>
<text x="2798.1" y="1680.0" font-size="30.20" textLength="37.8" lengthAdjust="spacingAndGlyphs" fill="#000">W:</text>
<text x="2802.2" y="1730.0" font-size="30.20" textLength="31.0" lengthAdjust="spacingAndGlyphs" fill="#000">H:</text>
<text x="2704.2" y="1780.0" font-size="30.20" textLength="130.1" lengthAdjust="spacingAndGlyphs" fill="#000">Rotation:</text>
<text x="2556.2" y="1844.0" font-size="30.20" textLength="29.1" lengthAdjust="spacingAndGlyphs" fill="#000">X:</text>
<text x="2557.1" y="1894.0" font-size="30.20" textLength="27.0" lengthAdjust="spacingAndGlyphs" fill="#000">Y:</text>
<defs><symbol id="mod" viewBox="0 0 48 50">
<path d="M2 18 V35 M2 26.5 H15" stroke="#000" stroke-width="4"/>
<circle cx="20.5" cy="26" r="6" fill="#fff" stroke="#000" stroke-width="3.2"/>
<path d="M24 21 C27 12 31 9 40 9 M24 31 C27 40 31 43 40 43" fill="none" stroke="#000" stroke-width="3"/>
<rect x="41" y="1.5" width="5" height="16" fill="#fff" stroke="#000" stroke-width="3"/>
<rect x="41" y="34" width="5" height="15" fill="#fff" stroke="#000" stroke-width="3"/>
</symbol>
<radialGradient id="gPur" cx=".5" cy=".35" r=".6"><stop offset="0" stop-color="#e8dcf4"/><stop offset=".7" stop-color="#b49ad8"/><stop offset="1" stop-color="#7a52b8"/></radialGradient>
<radialGradient id="gYel" cx=".5" cy=".7" r=".6"><stop offset="0" stop-color="#fbff70"/><stop offset=".6" stop-color="#f5b030"/><stop offset="1" stop-color="#b05a10"/></radialGradient>
<radialGradient id="gRed" cx=".5" cy=".4" r=".6"><stop offset="0" stop-color="#f89090"/><stop offset=".7" stop-color="#d83030"/><stop offset="1" stop-color="#901818"/></radialGradient>
<linearGradient id="gVeng" x1="0" y1="0" x2="0" y2="1"><stop offset="0" stop-color="#8ac6fa"/><stop offset="1" stop-color="#8ac6fa"/></linearGradient>
<symbol id="hier" viewBox="0 0 40 30">
<path d="M20 8 V15 M7 22 V15 H33 V22 M20 15 V22" fill="none" stroke="#2020e0" stroke-width="3"/>
<rect x="15" y="1" width="10" height="9" fill="#f4f040" stroke="#222" stroke-width="1.5"/>
<rect x="1" y="20" width="10" height="9" fill="#30e030" stroke="#222" stroke-width="1.5"/>
<rect x="15" y="20" width="10" height="9" fill="#2020d0" stroke="#222" stroke-width="1.5"/>
<rect x="29" y="20" width="10" height="9" fill="#f040f0" stroke="#222" stroke-width="1.5"/>
</symbol>
<symbol id="elem" viewBox="0 0 40 28">
<rect x="1" y="1" width="5" height="6" fill="#e8e020" stroke="#222"/><rect x="1" y="11" width="5" height="6" fill="#444" stroke="#222"/><rect x="1" y="21" width="5" height="6" fill="#e8e020" stroke="#222"/>
<rect x="13" y="3" width="24" height="22" fill="#98f0f4" stroke="#222" stroke-width="3"/>
<rect x="13" y="14" width="9" height="11" fill="#fff"/><rect x="15" y="16" width="6" height="6" fill="#f00"/>
</symbol>
<symbol id="expl" viewBox="0 0 40 40">
<rect x="1.5" y="1.5" width="37" height="34" fill="#fff" stroke="#111" stroke-width="3"/>
<rect x="3" y="6" width="5" height="26" fill="#111"/>
<circle cx="19" cy="18" r="12" fill="#d8e8e8" stroke="#222" stroke-width="3"/>
<path d="M27 26 L36 37" stroke="#f09020" stroke-width="4"/>
</symbol></defs>
<path d="M48.0 201.0 H70.0 L78.0 209.0 V239.0 H48.0 Z" fill="#f0f0f0" stroke="#000" stroke-width="3"/><path d="M70.0 201.0 V209.0 H78.0" fill="none" stroke="#000" stroke-width="2"/>
<path d="M80 233 L87 238 L80 243 Z" fill="#333"/>
<path d="M118.0 201.0 H140.0 L148.0 209.0 V239.0 H118.0 Z" fill="#f05a5a" stroke="#000" stroke-width="3"/><path d="M140.0 201.0 V209.0 H148.0" fill="none" stroke="#000" stroke-width="2"/>
<path d="M150 233 L157 238 L150 243 Z" fill="#5a1a1a"/>
<path d="M189 209 h12 l3 4 h12 v24 h-27 z" fill="#ffff40" stroke="#000" stroke-width="2"/><path d="M193 222 h32 l-9 15 h-27 z" fill="#808000" stroke="#000" stroke-width="2"/><path d="M207 207 c4 -6 12 -6 15 0" fill="none" stroke="#000" stroke-width="2.5"/><path d="M220 204 l4 -6 l3 6 z" fill="#000"/>
<path d="M259 209 h12 l3 4 h12 v24 h-27 z" fill="#ff80a0" stroke="#000" stroke-width="2"/><path d="M263 222 h32 l-9 15 h-27 z" fill="#902000" stroke="#000" stroke-width="2"/><path d="M277 207 c4 -6 12 -6 15 0" fill="none" stroke="#000" stroke-width="2.5"/><path d="M290 204 l4 -6 l3 6 z" fill="#000"/>
<rect x="331" y="202" width="35" height="35" fill="#808000" stroke="#000" stroke-width="3"/><rect x="338" y="203" width="21" height="14" fill="#f0f0f0" stroke="#000" stroke-width="2"/><rect x="337" y="224" width="23" height="12" fill="#000"/><rect x="352" y="226" width="5" height="8" fill="#f0f0f0"/>
<path d="M424.0 200.0 H445.0 L453.0 208.0 V237.0 H424.0 Z" fill="#ffffff" stroke="#000" stroke-width="3"/><path d="M445.0 200.0 V208.0 H453.0" fill="none" stroke="#000" stroke-width="2"/>
<circle cx="448" cy="222" r="9" fill="#d0e0e0" stroke="#000" stroke-width="2.5"/><path d="M454 229 L462 237" stroke="#000" stroke-width="4"/><circle cx="445" cy="219" r="2.5" fill="#20e0f0"/>
<path d="M504 202 H528 L524 216 H500 Z" fill="#f0f0f0" stroke="#000" stroke-width="2.5"/><rect x="495" y="216" width="39" height="15" rx="3" fill="#d8d4c8" stroke="#000" stroke-width="3"/><rect x="499" y="231" width="33" height="6" fill="#f0f0f0" stroke="#000" stroke-width="2.5"/><rect x="513" y="222" width="8" height="3" fill="#f0f000"/>
<rect x="564" y="200" width="41" height="39" fill="#ff9a00"/><rect x="567" y="218" width="35" height="18" fill="#111"/><path d="M584 204 V217 M574 208 L584 217 L594 208 M570 214 H598" stroke="#fff" stroke-width="3"/>
<text x="569" y="235" font-size="17" font-weight="bold" fill="#fff" textLength="31" lengthAdjust="spacingAndGlyphs">SVG</text>
<path d="M669 202 L680 228 M684 202 L673 228" stroke="#8c8c8c" stroke-width="2.5"/><circle cx="671" cy="232" r="5" fill="none" stroke="#8c8c8c" stroke-width="2.5"/><circle cx="683" cy="232" r="5" fill="none" stroke="#8c8c8c" stroke-width="2.5"/>
<path d="M728 203 h14 l6 6 v18 h-20 z" fill="#8c8c8c"/><path d="M732 211 h10 M732 217 h12 M732 223 h12" stroke="#d8d8d8" stroke-width="2"/><path d="M745 211 h15 l6 6 v18 h-21 z" fill="#8c8c8c"/><path d="M749 219 h11 M749 225 h13 M749 231 h13" stroke="#d8d8d8" stroke-width="2"/>
<rect x="796" y="206" width="30" height="30" rx="3" fill="#8c8c8c"/><rect x="805" y="203" width="12" height="6" fill="#d8d8d8" stroke="#8c8c8c" stroke-width="2"/><path d="M815 217 h15 l6 6 v14 h-21 z" fill="#8c8c8c"/><path d="M819 225 h11 M819 231 h13 M819 237 h13" stroke="#d8d8d8" stroke-width="2"/>
<path d="M866 203 h12 l6 6 v28 h-18 z" fill="#8c8c8c"/><path d="M870 211 h8 M870 217 h10 M870 223 h10" stroke="#d8d8d8" stroke-width="2"/><path d="M880 211 h16 l6 6 v21 h-22 z" fill="#8c8c8c"/><path d="M884 219 h12 M884 225 h14 M884 231 h14" stroke="#d8d8d8" stroke-width="2"/>
<path d="M966 219 C972 205 995 205 996 222" fill="none" stroke="#8c8c8c" stroke-width="6"/><path d="M961 209 V228 H980 Z" fill="#8c8c8c"/>
<path d="M1063 219 C1057 205 1034 205 1033 222" fill="none" stroke="#8c8c8c" stroke-width="6"/><path d="M1067 209 V228 H1048 Z" fill="#8c8c8c"/>
<path d="M58 341 L58 368 L65 362 L72 378 L78 375 L71 360 L80 359 Z" fill="#000" stroke="#000" stroke-width="2"/>
<path d="M119 331 L119 363 L127 356 L134 372 L139 369 L132 353 L141 352 Z" fill="#fff" stroke="#000" stroke-width="2.5"/><path d="M145 374 L151 379 L145 384 Z" fill="#000"/>
<path d="M41 443 C50 420 70 405 87 403" fill="none" stroke="#000" stroke-width="3"/><path d="M80 398 L88 404 L82 412" fill="none" stroke="#000" stroke-width="3"/><path d="M46 417 L58 428" stroke="#000" stroke-width="3"/><circle cx="72" cy="427" r="6" fill="none" stroke="#5050c0" stroke-width="2.5"/><circle cx="65" cy="439" r="6" fill="none" stroke="#5050c0" stroke-width="2.5"/><path d="M87 436 L91 440 L87 446 Z" fill="#000"/>
<path d="M109 432 C110 415 118 408 126 409" fill="none" stroke="#000" stroke-width="2.5"/><path d="M125 408 L125 434 L131 429 L137 442 L141 440 L136 427 L144 426 Z" fill="#90d0d0" stroke="#000" stroke-width="2.5"/><path d="M147 436 L152 440 L147 446 Z" fill="#000"/>
<rect x="51" y="466" width="30" height="30" fill="#fff" stroke="#000" stroke-width="3.5"/><path d="M87 502 L92 506 L87 511 Z" fill="#000"/>
<path d="M113 497 L147 466" stroke="#000" stroke-width="3"/><path d="M151 502 L156 506 L151 511 Z" fill="#000"/>
<rect x="45" y="532" width="40" height="39" fill="#333"/><rect x="47" y="534" width="34" height="33" fill="#30c8f0"/><rect x="47" y="556" width="34" height="11" fill="#50c040"/><circle cx="64" cy="549" r="9" fill="#3c8a2a"/><rect x="62" y="552" width="4" height="10" fill="#6a4a20"/>
<text x="111" y="568" style="font-family:'Liberation Serif',serif" font-size="48" font-weight="bold" fill="#000" textLength="42" lengthAdjust="spacingAndGlyphs">A</text>
<path d="M47 636 L72 610" stroke="#6040a0" stroke-width="6"/><path d="M47 636 L72 610" stroke="#e0e0ff" stroke-width="2.5"/><path d="M68 606 L78 616" stroke="#000" stroke-width="6"/><path d="M76 607 L84 599" stroke="#000" stroke-width="7"/>
<path d="M111 615 L128 602 H148 V620 L135 632 H111 Z" fill="#a0a0a0" stroke="#000" stroke-width="2"/><path d="M111 615 H135 V632 H111 Z" fill="#f8f0b0" stroke="#000" stroke-width="2"/><path d="M135 615 L148 602" stroke="#000" stroke-width="2"/><path d="M145 636 L150 640 L145 645 Z" fill="#000"/>
<path d="M48 712 L44 700 C44 696 49 696 50 700 L52 704 V688 C52 684 57 684 57 688 V700 V684 C57 680 63 680 63 684 V700 V686 C63 682 69 682 69 686 V700 V692 C69 688 75 688 75 692 V712 C72 722 66 726 56 726 Z" fill="#fff" stroke="#000" stroke-width="2.5"/>
<circle cx="126" cy="705" r="13" fill="#b8f8ff" stroke="#000" stroke-width="4"/><path d="M135 714 L151 729" stroke="#000" stroke-width="6"/>
<use href="#mod" x="43.0" y="773.0" width="48.0" height="53.0"/>
<use href="#mod" x="187.0" y="276.0" width="39.0" height="39.0"/>
<circle cx="252" cy="295" r="17.5" fill="url(#gPur)" stroke="#6a40a8" stroke-width="2"/><path d="M241 302 L252 285 L263 302 Z" fill="#5a3a98"/>
<circle cx="295" cy="295" r="18" fill="url(#gYel)" stroke="#8a4a20" stroke-width="2"/><rect x="282" y="291" width="26" height="7" fill="#b05a10"/>
<circle cx="2444" cy="295" r="16" fill="url(#gRed)" stroke="#802020" stroke-width="2"/><path d="M2436 287 L2452 303 M2452 287 L2436 303" stroke="#ffd0d0" stroke-width="4"/>
<use href="#mod" x="231.0" y="335.0" width="47.0" height="50.0"/>
<use href="#mod" x="569.0" y="335.0" width="49.0" height="50.0"/>
<circle cx="2370" cy="358" r="22" fill="#f8ffb0" opacity=".6"/><path d="M2362 382 V372 C2352 362 2356 340 2370 340 C2384 340 2388 362 2378 372 V382 Z" fill="#f0f080" stroke="#333" stroke-width="2.5"/><rect x="2363" y="378" width="14" height="6" fill="#333"/>
<path d="M2425 340 V358 M2416 349 H2434" stroke="#909090" stroke-width="4"/><path d="M2415 372 L2427 362 V382 Z M2455 372 L2443 362 V382 Z" fill="#a0a0a0"/><path d="M2428 372 H2442" stroke="#a0a0a0" stroke-width="2" stroke-dasharray="3 2"/>
<use href="#hier" x="2023.0" y="2182.0" width="40.0" height="30.0"/>
<use href="#elem" x="2088.0" y="2178.0" width="42.0" height="30.0"/>
<use href="#expl" x="2151.0" y="2171.0" width="47.0" height="47.0"/>
<path d="M2226 2176 L2258 2195 L2226 2214 Z" fill="#30d040" stroke="#000" stroke-width="3"/>
<path d="M2284 2212 V2182 C2292 2178 2300 2180 2304 2186 C2308 2180 2316 2178 2324 2182 V2212 Z" fill="#a8a8d8" stroke="#000" stroke-width="3"/><path d="M2288 2208 V2184 C2294 2182 2300 2184 2304 2190 C2308 2184 2314 2182 2320 2184 V2208 C2314 2204 2308 2206 2304 2210 C2300 2206 2294 2204 2288 2208 Z" fill="#fff" stroke="#000" stroke-width="2.5"/>
<path d="M2362 2178 L2348 2195 L2362 2212 M2376 2178 L2390 2195 L2376 2212" fill="none" stroke="#2020f0" stroke-width="5"/>
<path d="M2413 2185 H2448 M2413 2193 H2448 M2413 2201 H2448 M2413 2209 H2448" stroke="#000" stroke-width="3"/>
<use href="#hier" x="2490.0" y="282.0" width="41.0" height="31.0"/>
<use href="#veng" x="2488.0" y="338.0" width="45.0" height="50.0"/>
<use href="#goal" x="2517.0" y="428.0" width="38.0" height="42.0"/>
<use href="#attacker" x="2514.0" y="474.0" width="42.0" height="51.0"/>
<path d="M2517 567 C2522 552 2534 542 2546 540" fill="none" stroke="#222" stroke-width="3"/><circle cx="2551" cy="539" r="5.5" fill="#fff" stroke="#222" stroke-width="2.5"/>
<path d="M2722 467 C2726 451 2738 439 2756 436" fill="none" stroke="#18e818" stroke-width="3.5"/><path d="M2752 428 L2766 435 L2755 445 Z" fill="#18e818"/>
<path d="M2722 515 C2726 499 2738 487 2756 484" fill="none" stroke="#1828f0" stroke-width="3.5"/><path d="M2752 476 L2766 483 L2755 493 Z" fill="#1828f0"/>
<path d="M2722 563 C2726 547 2738 535 2756 532" fill="none" stroke="#f0f010" stroke-width="3.5"/><path d="M2752 524 L2766 531 L2755 541 Z" fill="#f0f010"/>
<path d="M2722 611 C2726 595 2738 583 2756 580" fill="none" stroke="#f03c14" stroke-width="3.5"/><path d="M2752 572 L2766 579 L2755 589 Z" fill="#f03c14"/>
<path d="M2722 658 C2726 642 2738 630 2756 627" fill="none" stroke="#1a1a1a" stroke-width="3.5"/><path d="M2752 619 L2766 626 L2755 636 Z" fill="#1a1a1a"/>
<use href="#veng" x="3022.0" y="426.0" width="46.0" height="48.0"/>
<use href="#cloud" x="3020.0" y="491.0" width="50.0" height="38.0"/>
<use href="#pc" x="3024.0" y="541.0" width="44.0" height="52.0"/>
<rect x="3022" y="603" width="47" height="42" rx="3" fill="#d8d8d8" stroke="#b08870" stroke-width="2.5"/><rect x="3026" y="606" width="40" height="4" fill="#c87070"/><rect x="3026" y="612" width="19" height="13" fill="#70e0e0"/><rect x="3048" y="612" width="18" height="13" fill="#f06090"/><rect x="3026" y="628" width="11" height="13" fill="#e0d040"/><rect x="3039" y="628" width="13" height="13" fill="#f0b000"/><path d="M3055 631 H3065 M3055 635 H3065 M3055 639 H3065" stroke="#7060a0" stroke-width="2"/>
<use href="#chan" x="3021.0" y="657.0" width="49.0" height="49.0"/>
<use href="#ied" x="3020.0" y="719.0" width="51.0" height="38.0"/>
<rect x="3021" y="775" width="14" height="22" fill="#2a3440"/><rect x="3038" y="775" width="15" height="22" fill="#2a3440"/><rect x="3056" y="775" width="14" height="22" fill="#2a3440"/><rect x="3023" y="778" width="10" height="7" fill="#90a8b8"/><rect x="3040" y="778" width="11" height="7" fill="#90a8b8"/><rect x="3058" y="778" width="10" height="7" fill="#90a8b8"/><rect x="3021" y="800" width="49" height="14" fill="#3a4450"/><circle cx="3045.5" cy="796" r="7" fill="#b05840"/><path d="M3034 818 C3034 806 3057 806 3057 818 Z" fill="#2aa0f0"/><rect x="3040" y="812" width="11" height="7" fill="#f04010"/>
<use href="#app" x="3021.0" y="831.0" width="48.0" height="48.0"/>
<path d="M2491 1012 C2496 995 2510 980 2526 975" fill="none" stroke="#f0f010" stroke-width="3.5"/><path d="M2520 966 L2535 972 L2524 985 Z" fill="#f0f010"/>
<use href="#expl" x="2490.0" y="1058.0" width="41.0" height="38.0"/>
<use href="#elem" x="2491.0" y="1523.0" width="40.0" height="29.0"/>
<g transform="translate(2569.6,1127) scale(0.0805)"><use href="#diag"/></g>
<circle cx="2687" cy="1447" r="10" fill="#e0f0f0" stroke="#000" stroke-width="3.5"/><path d="M2681 1447 H2693" stroke="#000" stroke-width="3"/><path d="M2694 1454 L2703 1464" stroke="#000" stroke-width="4.5"/>
<circle cx="2975" cy="1447" r="10" fill="#e0f0f0" stroke="#000" stroke-width="3.5"/><path d="M2969 1447 H2981 M2975 1441 V1453" stroke="#000" stroke-width="3"/><path d="M2982 1454 L2991 1464" stroke="#000" stroke-width="4.5"/>
<path d="M2802 1440 L2814 1429 L2826 1440 V1455 H2802 Z" fill="#90e070" stroke="#909090" stroke-width="1.5"/><rect x="2803" y="1446" width="22" height="8" fill="#60c040"/>
<rect x="2507" y="1656" width="42" height="41" fill="none" stroke="#000" stroke-width="4"/><rect x="2501" y="1648" width="12" height="12" fill="#000"/>
<path d="M2759 1666 V1690 H2787 V1666 H2770" fill="none" stroke="#000" stroke-width="3"/><path d="M2770 1660 H2785 L2780 1655" fill="none" stroke="#000" stroke-width="3"/><path d="M2752 1678 L2766 1678 L2759 1690 Z" fill="#000"/>
<path d="M2509 1839 H2537 M2523 1825 V1853" stroke="#000" stroke-width="3"/>
<ellipse cx="2968" cy="1680" rx="7" ry="10" fill="none" stroke="#555" stroke-width="2.5"/><ellipse cx="2968" cy="1696" rx="7" ry="10" fill="none" stroke="#555" stroke-width="2.5"/><ellipse cx="2968" cy="1712" rx="7" ry="10" fill="none" stroke="#555" stroke-width="2.5"/>
</svg>
</body></html>
